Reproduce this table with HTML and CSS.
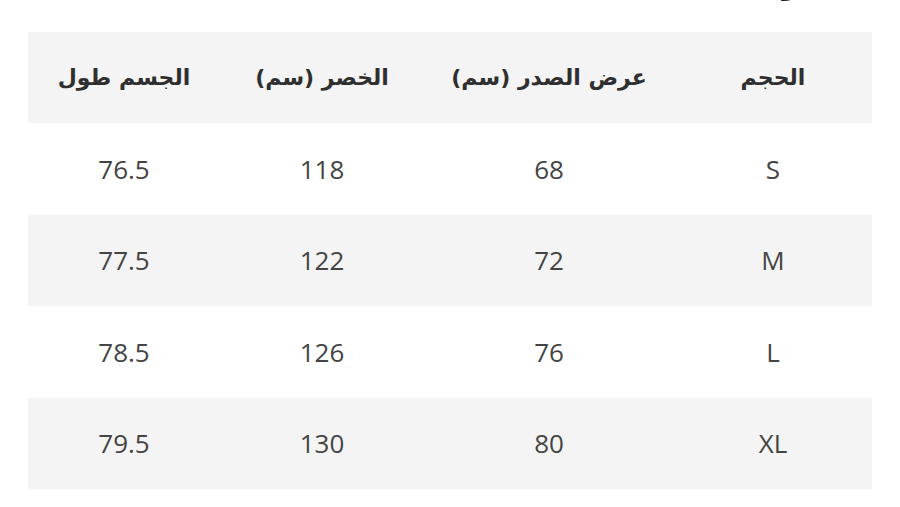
FILE: index.html
```html
<!DOCTYPE html>
<html lang="ar" dir="rtl">
<head>
<meta charset="utf-8">
<link rel="stylesheet" href="styles.css">
</head>
<body>
<div class="page">
  <div class="title-wrap"><h2 class="title">جدول المقاسات</h2></div>
  <table class="size-table">
    <colgroup>
      <col class="c1"><col class="c2"><col class="c3"><col class="c4">
    </colgroup>
    <thead>
      <tr><th>الحجم</th><th>عرض الصدر (سم)</th><th>الخصر (سم)</th><th>الجسم طول</th></tr>
    </thead>
    <tbody>
      <tr><td>S</td><td>68</td><td>118</td><td>76.5</td></tr>
      <tr class="alt"><td>M</td><td>72</td><td>122</td><td>77.5</td></tr>
      <tr><td>L</td><td>76</td><td>126</td><td>78.5</td></tr>
      <tr class="alt"><td>XL</td><td>80</td><td>130</td><td>79.5</td></tr>
    </tbody>
  </table>
</div>
</body>
</html>
```

FILE: styles.css
```css
html, body {
  margin: 0;
  padding: 0;
  background: #ffffff;
}
.page {
  padding: 0 28px;
  width: 844px;
}
.title-wrap {
  height: 32px;
  display: flex;
  flex-direction: column;
  overflow: hidden;
}
.title {
  margin: -28px 44px 0 0;
  font-family: "DejaVu Sans", sans-serif;
  font-weight: bold;
  font-size: 24px;
  line-height: 30px;
  color: #222;
  text-align: right;
}
.size-table {
  width: 844px;
  border-collapse: collapse;
  table-layout: fixed;
}
.c1 { width: 198px; }
.c2 { width: 250px; }
.c3 { width: 204px; }
.c4 { width: 192px; }
.size-table th,
.size-table td {
  height: 91.4px;
  padding: 0;
  text-align: center;
  vertical-align: middle;
  box-sizing: border-box;
}
.size-table thead tr,
.size-table tr.alt {
  background: #f4f4f4;
}
.size-table th {
  font-family: "DejaVu Sans", sans-serif;
  font-weight: bold;
  font-size: 22px;
  color: #2f2f2f;
}
.size-table td {
  font-family: "Open Sans", sans-serif;
  font-size: 26px;
  color: #444444;
}
```
